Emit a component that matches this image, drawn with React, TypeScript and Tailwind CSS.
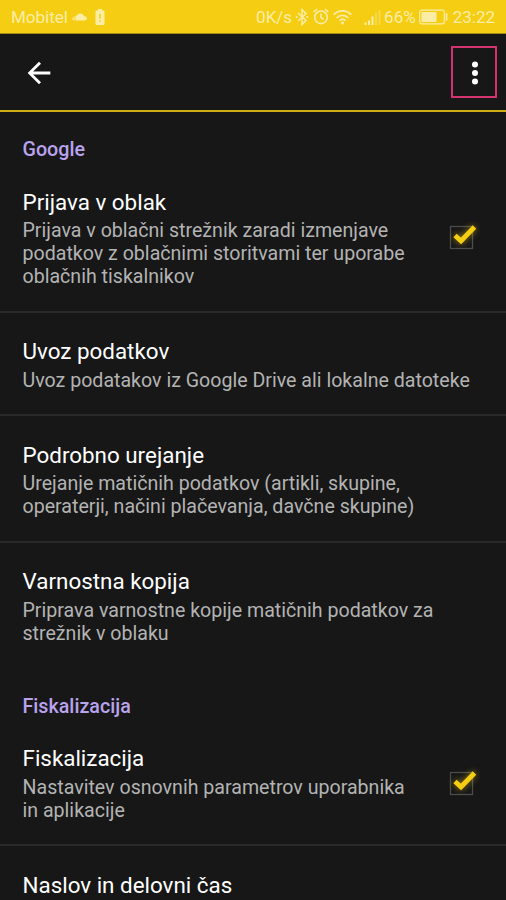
import React from 'react';

interface Preference {
  title: string;
  summary?: string[];
  checked?: boolean;
}

interface PreferenceGroup {
  name: string;
  items: Preference[];
}

const groups: PreferenceGroup[] = [
  {
    name: 'Google',
    items: [
      {
        title: 'Prijava v oblak',
        summary: [
          'Prijava v oblačni strežnik zaradi izmenjave',
          'podatkov z oblačnimi storitvami ter uporabe',
          'oblačnih tiskalnikov',
        ],
        checked: true,
      },
      {
        title: 'Uvoz podatkov',
        summary: ['Uvoz podatakov iz Google Drive ali lokalne datoteke'],
      },
      {
        title: 'Podrobno urejanje',
        summary: [
          'Urejanje matičnih podatkov (artikli, skupine,',
          'operaterji, načini plačevanja, davčne skupine)',
        ],
      },
      {
        title: 'Varnostna kopija',
        summary: [
          'Priprava varnostne kopije matičnih podatkov za',
          'strežnik v oblaku',
        ],
      },
    ],
  },
  {
    name: 'Fiskalizacija',
    items: [
      {
        title: 'Fiskalizacija',
        summary: ['Nastavitev osnovnih parametrov uporabnika', 'in aplikacije'],
        checked: true,
      },
      { title: 'Naslov in delovni čas' },
    ],
  },
];

const StatusBar: React.FC = () => (
  <div className="flex h-[34px] shrink-0 items-center border-b border-[#a08a16] bg-[#f5ce14] pr-[11px] pl-[11px] text-[17px] leading-[34px] text-[#fceda6]">
    <span>Mobitel</span>
    <svg className="mt-[1px] ml-[4px]" width="15" height="8" viewBox="0 0 15 8" fill="currentColor">
      <path d="M5.4 7.5V1.3C8.4-.4 11.4.9 12 3.2c1.6-.2 2.8.8 2.8 2.1 0 1.3-1 2.2-2.2 2.2zM3.9 2.6h1.5v4.9H3.900zM2.4 3.3h1v4.2h-1zM.5 4.6h1.3v2.300H.5z" />
    </svg>
    <svg className="ml-[8px]" width="10" height="16" viewBox="0 0 10 16" fill="currentColor">
      <path
        fillRule="evenodd"
        d="M3 0h4v1.6h1.6c.5 0 .9.4.9.9v12.6c0 .5-.4.9-.9.9H1.4c-.5 0-.9-.4-.9-.9V2.5c0-.5.4-.9.9-.9H3zM4.2 4.8v5h1.600v-5zm0 6.400v1.600h1.600v-1.600z"
      />
    </svg>
    <span className="ml-auto">0K/s</span>
    <svg className="ml-[3px]" width="14" height="18" viewBox="0 0 14 18" fill="none" stroke="currentColor" strokeWidth="1.5">
      <path d="M3 5l8 7.5-4 4v-15l4 4L3 13" />
      <path d="M.8 9h1.8M11.4 9h1.8" strokeWidth="1.8" />
    </svg>
    <svg className="ml-[4px]" width="16" height="17" viewBox="0 0 16 17" fill="none" stroke="currentColor" strokeWidth="1.6">
      <circle cx="8" cy="9.3" r="6.3" />
      <path d="M8 5.5v4l2.6 2M.7 4L4 1.2M15.3 4L12 1.2" />
    </svg>
    <svg className="ml-[4px]" width="19" height="16" viewBox="0 0 19 16" fill="none" stroke="currentColor" strokeWidth="1.8">
      <path d="M.8 5.6c5-4.9 12.4-4.9 17.4 0M3.7 8.8c3.4-3.2 8.2-3.2 11.6 0M6.5 11.6c1.8-1.6 4.2-1.6 6 0" />
      <circle cx="9.5" cy="13.9" r="1.5" fill="currentColor" stroke="none" />
    </svg>
    <svg className="ml-[12px]" width="17" height="16" viewBox="0 0 17 16" fill="currentColor">
      <path d="M.5 13.5h2V16h-2zM4 11.5h2V16H4zM7.500 7.5h2V16h-2z" />
      <path d="M11 4h2v12h-2zM14.5 1h2v15h-2z" opacity="0.35" />
    </svg>
    <span className="ml-[3px]">66%</span>
    <svg className="ml-[3px]" width="30" height="16" viewBox="0 0 30 16" fill="none" stroke="currentColor">
      <rect x=".7" y="1.2" width="24.6" height="13.6" rx="2" strokeWidth="1.2" />
      <path d="M2.5 3h15v10h-15z" fill="currentColor" stroke="none" />
      <path d="M27.5 4.5v7" strokeWidth="1.8" />
    </svg>
    <span className="ml-[4px]">23:22</span>
  </div>
);

const Toolbar: React.FC = () => (
  <header className="flex h-[78px] shrink-0 items-center justify-between border-b-2 border-[#cfae13] pr-[9px] pl-[22px]">
    <button aria-label="Nazaj" className="pt-[2px]">
      <svg width="34" height="34" viewBox="0 0 24 24" fill="white">
        <path d="M20 11H7.83l5.59-5.59L12 4l-8 8 8 8 1.41-1.41L7.83 13H20v-2z" />
      </svg>
    </button>
    <button
      aria-label="Meni"
      className="flex h-[52px] w-[46px] items-center justify-center border-2 border-[#d43370] pt-[2px] pl-[2px]"
    >
      <svg width="8" height="24" viewBox="0 0 8 24" fill="white">
        <circle cx="4" cy="3.6" r="3" />
        <circle cx="4" cy="12" r="3" />
        <circle cx="4" cy="20.4" r="3" />
      </svg>
    </button>
  </header>
);

const CheckMark: React.FC = () => (
  <svg className="mt-[1px] mr-[26px] shrink-0" width="36" height="36" viewBox="0 0 36 36" fill="none">
    <rect x="6.5" y="7.5" width="22" height="22" stroke="#4c4c4c" strokeWidth="1.3" />
    <path
      d="M11 16.5l6 5.500L30.500 8"
      stroke="#f5ce14"
      strokeWidth="4.800"
      strokeLinejoin="miter"
      className="drop-shadow-[0_0_3px_rgba(245,206,20,0.6)]"
    />
  </svg>
);

const PreferenceRow: React.FC<{ item: Preference }> = ({ item }) => (
  <div className="flex items-center justify-between pl-[22.5px]">
    <div className="shrink-0 pt-[25.5px] pb-[22.5px] whitespace-nowrap">
      <h3 className="text-[22.4px] leading-[26px] text-white">{item.title}</h3>
      {item.summary && (
        <p className="mt-[4.5px] text-[19.6px] leading-[23px] text-[#b3b3b3]">
          {item.summary.map((line) => (
            <span key={line} className="block">
              {line}
            </span>
          ))}
        </p>
      )}
    </div>
    {item.checked && <CheckMark />}
  </div>
);

const App: React.FC = () => {
  return (
    <div className="flex h-[900px] w-[506px] flex-col overflow-hidden bg-[#171717] font-[Roboto,sans-serif]">
      <StatusBar />
      <Toolbar />
      <main className="min-h-0 flex-1 overflow-hidden">
        {groups.map((group) => (
          <section key={group.name} className="not-first:pt-[1.5px]">
            <h2 className="mb-[2.2px] pt-[26px] pl-[22.5px] text-[19.7px] leading-[23px] font-medium text-[#b9a3ec]">
              {group.name}
            </h2>
            <div className="divide-y-2 divide-[#2a2a2a]">
              {group.items.map((item) => (
                <PreferenceRow key={item.title} item={item} />
              ))}
            </div>
          </section>
        ))}
      </main>
    </div>
  );
};

export default App;
